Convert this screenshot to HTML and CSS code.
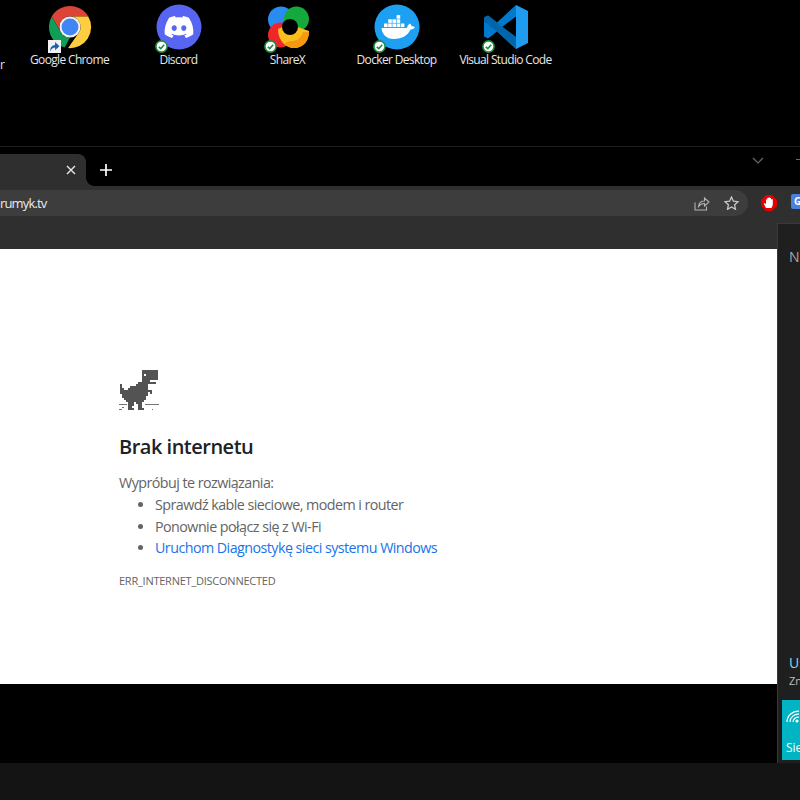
FILE: index.html

```html
<!DOCTYPE html>
<html lang="pl">
<head>
    <meta charset="UTF-8">
    <meta name="viewport" content="width=device-width, initial-scale=1.0">
    <title>Brak internetu</title>
    <link rel="stylesheet" href="styles.css">
</head>
<body>
    <!-- desktop shortcuts -->
    <div class="desktop">
        <div class="shortcut-edge">
            <span class="shortcut-label">r</span>
        </div>
        <div class="shortcut">
            <div class="shortcut-icon">
                <svg width="46" height="46" viewBox="0 0 48 48">
                    <path fill="#db4437" d="M4.95 13A22 22 0 0 1 43.05 13H24A11 11 0 0 0 14.47 29.5Z"/>
                    <path fill="#0f9d58" d="M4.95 13L14.47 29.5A11 11 0 0 0 24 35L18.5 45.3A22 22 0 0 1 4.95 13Z"/>
                    <path fill="#ffcd40" d="M43.05 13H24A11 11 0 0 1 33.53 29.5L22 46A22 22 0 0 0 43.05 13Z"/>
                    <circle cx="24" cy="24" r="11" fill="#f1f1f1"/>
                    <circle cx="24" cy="24" r="8.8" fill="#4285f4"/>
                </svg>
                <span class="link-arrow">
                    <svg width="11" height="11" viewBox="0 0 10 10"><path fill="#1c5fb0" d="M1 9.5C1 5.5 3 3.8 5.5 3.6V1L9.5 4.8 5.5 8.4V6C3.8 6 2.3 7 1 9.5Z"/></svg>
                </span>
            </div>
            <span class="shortcut-label">Google Chrome</span>
        </div>
        <div class="shortcut">
            <div class="shortcut-icon">
                <svg width="46" height="46" viewBox="0 0 46 46">
                    <circle cx="23" cy="23" r="22.5" fill="#5865f2"/>
                    <g transform="translate(8.6 8.6) scale(1.2)">
                        <path fill="#fff" d="M20.317 4.3698a19.7913 19.7913 0 00-4.8851-1.5152.0741.0741 0 00-.0785.0371c-.211.3753-.4447.8648-.6083 1.2495-1.8447-.2762-3.68-.2762-5.4868 0-.1636-.3933-.4058-.8742-.6177-1.2495a.077.077 0 00-.0785-.037 19.7363 19.7363 0 00-4.8852 1.515.0699.0699 0 00-.0321.0277C.5334 9.0458-.319 13.5799.0992 18.0578a.0824.0824 0 00.0312.0561c2.0528 1.5076 4.0413 2.4228 5.9929 3.0294a.0777.0777 0 00.0842-.0276c.4616-.6304.8731-1.2952 1.226-1.9942a.076.076 0 00-.0416-.1057c-.6528-.2476-1.2743-.5495-1.8722-.8923a.077.077 0 01-.0076-.1277c.1258-.0943.2517-.1923.3718-.2914a.0743.0743 0 01.0776-.0105c3.9278 1.7933 8.18 1.7933 12.0614 0a.0739.0739 0 01.0785.0095c.1202.099.246.1981.3728.2924a.077.077 0 01-.0066.1276 12.2986 12.2986 0 01-1.873.8914.0766.0766 0 00-.0407.1067c.3604.698.7719 1.3628 1.225 1.9932a.076.076 0 00.0842.0286c1.961-.6067 3.9495-1.5219 6.0023-3.0294a.077.077 0 00.0313-.0552c.5004-5.177-.8382-9.6739-3.5485-13.6604a.061.061 0 00-.0312-.0286zM8.02 15.3312c-1.1825 0-2.1569-1.0857-2.1569-2.419 0-1.3332.9555-2.4189 2.157-2.4189 1.2108 0 2.1757 1.0952 2.1568 2.419 0 1.3332-.9555 2.4189-2.1569 2.4189zm7.9748 0c-1.1825 0-2.1569-1.0857-2.1569-2.419 0-1.3332.9554-2.4189 2.1569-2.4189 1.2108 0 2.1757 1.0952 2.1568 2.419 0 1.3332-.946 2.4189-2.1568 2.4189Z"/>
                    </g>
                </svg>
                <svg class="sync-check" width="13" height="13" viewBox="0 0 13 13"><circle cx="6.5" cy="6.5" r="5.6" fill="#fff" stroke="#1e8e3e" stroke-width="1.6"/><path d="M3.8 6.8L5.8 8.6 9.2 4.8" fill="none" stroke="#1e8e3e" stroke-width="1.6"/></svg>
            </div>
            <span class="shortcut-label">Discord</span>
        </div>
        <div class="shortcut">
            <div class="shortcut-icon">
                <svg width="46" height="46" viewBox="0 0 46 46">
                    <circle cx="16" cy="15.5" r="13" fill="#2a8cf0"/>
                    <circle cx="31.5" cy="15" r="12.5" fill="#15a83c"/>
                    <circle cx="15.5" cy="31" r="12.5" fill="#f0272a"/>
                    <path fill="#fbbf1d" d="M13 25C13 37 21 44 29 44C38 44 44 37 44 27L24 20Z"/>
                    <path fill="#f59a10" d="M24 37C30 38 36 35 38 28L44 28C44 37 38 44 29 44C25 44 22 42 19 40Z"/>
                    <circle cx="25" cy="23" r="8"/>
                </svg>
                <svg class="sync-check" width="13" height="13" viewBox="0 0 13 13"><circle cx="6.5" cy="6.5" r="5.6" fill="#fff" stroke="#1e8e3e" stroke-width="1.6"/><path d="M3.8 6.8L5.8 8.6 9.2 4.8" fill="none" stroke="#1e8e3e" stroke-width="1.6"/></svg>
            </div>
            <span class="shortcut-label">ShareX</span>
        </div>
        <div class="shortcut">
            <div class="shortcut-icon">
                <svg width="46" height="46" viewBox="0 0 46 46">
                    <circle cx="23" cy="23" r="22.5" fill="#1d9ff2"/>
                    <path fill="#fff" d="M7.5 24H33C33.5 21.5 35 20 36 19.5 37 20.5 37.6 21.5 37.8 22.5 38.8 22.2 40 22.4 40.8 23.2 39.8 25 38 25.6 36.5 25.6 34 31.5 28 35 20 35 12 35 8 30 7.5 24Z"/>
                    <g fill="#fff">
                        <rect x="10" y="19.5" width="3.6" height="3.6"/><rect x="14.2" y="19.5" width="3.6" height="3.6"/><rect x="18.4" y="19.5" width="3.6" height="3.6"/><rect x="22.6" y="19.5" width="3.6" height="3.6"/><rect x="26.8" y="19.5" width="3.6" height="3.6"/>
                        <rect x="14.2" y="15.3" width="3.6" height="3.6"/><rect x="18.4" y="15.3" width="3.6" height="3.6"/><rect x="22.6" y="15.3" width="3.6" height="3.6"/>
                        <rect x="22.6" y="11.1" width="3.6" height="3.6"/>
                    </g>
                </svg>
                <svg class="sync-check" width="13" height="13" viewBox="0 0 13 13"><circle cx="6.5" cy="6.5" r="5.6" fill="#fff" stroke="#1e8e3e" stroke-width="1.6"/><path d="M3.8 6.8L5.8 8.6 9.2 4.8" fill="none" stroke="#1e8e3e" stroke-width="1.6"/></svg>
            </div>
            <span class="shortcut-label">Docker Desktop</span>
        </div>
        <div class="shortcut">
            <div class="shortcut-icon">
                <svg width="46" height="46" viewBox="0 0 46 46">
                    <path fill="#007acc" d="M33 1L14 18.5 5 11.5 1 13.5V32.5L5 34.5 14 27.5 33 45V33.5L19 23 33 12.5Z"/>
                    <path fill="#0065a9" d="M1 13.5L5 11.5 33 33V45L14 27.5 5 20 1 18Z"/>
                    <path fill="#1f9cf0" d="M33 1L45 7V39L33 45Z"/>
                </svg>
                <svg class="sync-check" width="13" height="13" viewBox="0 0 13 13"><circle cx="6.5" cy="6.5" r="5.6" fill="#fff" stroke="#1e8e3e" stroke-width="1.6"/><path d="M3.8 6.8L5.8 8.6 9.2 4.8" fill="none" stroke="#1e8e3e" stroke-width="1.6"/></svg>
            </div>
            <span class="shortcut-label">Visual Studio Code</span>
        </div>
    </div>

    <!-- browser window -->
    <div class="tabstrip">
        <div class="tab">
            <svg width="10" height="10" viewBox="0 0 10 10"><path d="M1 1L9 9M9 1L1 9" stroke="#e8e8e8" stroke-width="1.4"/></svg>
        </div>
        <div class="tab-curve"></div>
        <svg class="new-tab" width="12" height="12" viewBox="0 0 12 12"><path d="M6 0V12M0 6H12" stroke="#fff" stroke-width="1.7"/></svg>
        <svg class="tab-search" width="12" height="7" viewBox="0 0 12 7"><path d="M1 1L6 6 11 1" fill="none" stroke="#6a6a6a" stroke-width="1.1"/></svg>
        <div class="minimize"></div>
    </div>
    <div class="toolbar">
        <div class="omnibox">
            <span class="url">rumyk.tv</span>
            <svg class="share" width="16" height="15" viewBox="0 0 16 15"><path d="M1 6.5V14H12.5V10.5M4.5 10.5C5 6.5 8 5 10.5 5V2L15 6 10.5 10V7.5C8 7.5 6 8.5 4.5 10.5Z" fill="none" stroke="#b4b4b4" stroke-width="1.1"/></svg>
            <svg class="star" width="15" height="14" viewBox="0 0 15 14"><path d="M7.5 1L9.4 5.2 14 5.7 10.6 8.8 11.5 13.3 7.5 11 3.5 13.3 4.4 8.8 1 5.7 5.6 5.2Z" fill="none" stroke="#c8c8c8" stroke-width="1.3"/></svg>
        </div>
        <svg class="ext-stop" width="16" height="16" viewBox="0 0 16 16">
            <path fill="#e60000" d="M5 0H11L16 5V11L11 16H5L0 11V5Z"/>
            <path fill="#fff" d="M5 13L2.8 8.8 3.8 8 5 9.2V4.5H6.2V3H7.5V2.6H9V3H10V4.2H11.8V10L10.5 13Z"/>
        </svg>
        <div class="ext-translate"><span class="ext-g">G</span></div>
    </div>
    <div class="page">
        <svg class="dino" width="42" height="44" viewBox="0 0 42 44">
            <path fill="#535353" d="M23 0H39V10H31V12H37V14H29V20H33V24H31V22H29V26H27V30H25V32H23V38H25V40H19V34H17V32H15V36H13V38H15V40H9V32H7V30H5V28H3V24H1V14H3V18H5V20H9V18H11V16H17V14H19V12H23Z"/>
            <rect x="25" y="4" width="2" height="2" fill="#fff"/>
            <g fill="#737373">
                <rect x="0" y="34" width="8" height="1"/>
                <rect x="26" y="34" width="14" height="1"/>
                <rect x="0" y="39" width="3" height="1"/>
                <rect x="3" y="37" width="2" height="1"/>
                <rect x="33" y="39" width="1" height="1"/>
            </g>
        </svg>
        <h1 class="page-title">Brak internetu</h1>
        <p class="try-label">Wypróbuj te rozwiązania:</p>
        <ul class="suggestions">
            <li>Sprawdź kable sieciowe, modem i router</li>
            <li>Ponownie połącz się z Wi-Fi</li>
            <li><a href="#">Uruchom Diagnostykę sieci systemu Windows</a></li>
        </ul>
        <div class="error-code">ERR_INTERNET_DISCONNECTED</div>
    </div>
    <div class="desktop-gap"></div>
    <div class="taskbar"></div>

    <!-- notification panel, sits over the window -->
    <aside class="panel">
        <div class="panel-title">N</div>
        <div class="panel-bottom">
            <div class="panel-heading">Us</div>
            <div class="panel-sub">Zn</div>
            <div class="net-tile">
                <svg width="14" height="13" viewBox="0 0 14 13"><g fill="none" stroke="#fff" stroke-width="1.2"><path d="M1 12A11 11 0 0 1 13 1.2"/><path d="M4 12A8 8 0 0 1 13 4.2"/><path d="M7 12A5 5 0 0 1 13 7.2"/></g><circle cx="11" cy="11" r="1.6" fill="#fff"/></svg>
                <span class="net-label">Sie</span>
            </div>
        </div>
    </aside>
</body>
</html>
```

FILE: styles.css

```css
* {
    box-sizing: border-box;
}
html, body {
    height: 100%;
}
body {
    margin: 0;
    background-color: #000;
    font-family: "Open Sans", "Noto Sans", Arial, sans-serif;
    display: flex;
    flex-direction: column;
    overflow: hidden;
    position: relative;
}

/* desktop */
.desktop {
    height: 147px;
    flex: none;
    display: flex;
    padding-top: 4px;
    border-bottom: 1px solid #1f1f1f;
}
.shortcut-edge {
    width: 15px;
    flex: none;
    padding-top: 48px;
}
.shortcut {
    width: 109px;
    flex: none;
    display: flex;
    flex-direction: column;
    align-items: center;
}
.shortcut-icon {
    width: 46px;
    height: 46px;
    position: relative;
}
.shortcut-label {
    margin-top: 2px;
    color: #e6e6e6;
    font-size: 12px;
    line-height: 16px;
    white-space: nowrap;
    letter-spacing: -0.65px;
}
.sync-check {
    position: absolute;
    left: -1px;
    bottom: -3px;
}
.link-arrow {
    position: absolute;
    left: 1px;
    bottom: -3px;
    width: 13px;
    height: 13px;
    background-color: #f2f2f2;
    display: flex;
    align-items: center;
    justify-content: center;
}

/* browser chrome */
.tabstrip {
    height: 39px;
    flex: none;
    display: flex;
    align-items: flex-end;
}
.tab {
    width: 86px;
    height: 32px;
    flex: none;
    background-color: #2f2f2f;
    border-top-right-radius: 8px;
    display: flex;
    align-items: center;
    justify-content: flex-end;
    padding-right: 10px;
}
.tab-curve {
    width: 8px;
    height: 8px;
    flex: none;
    background: radial-gradient(circle at 100% 0, transparent 7.5px, #2f2f2f 8px);
}
.new-tab {
    margin: 0 0 10px 6px;
    flex: none;
}
.tab-search {
    margin: 0 0 22px 640px;
    flex: none;
}
.minimize {
    width: 8px;
    height: 1px;
    margin: 0 0 26px 32px;
    flex: none;
    background-color: #6a6a6a;
}
.toolbar {
    height: 63px;
    flex: none;
    background-color: #2f2f2f;
    display: flex;
    align-items: flex-start;
    padding-top: 4px;
}
.omnibox {
    width: 748px;
    height: 26px;
    flex: none;
    background-color: #3d3d3d;
    border-radius: 0 13px 13px 0;
    display: flex;
    align-items: center;
}
.url {
    color: #e8eaed;
    font-size: 13px;
    letter-spacing: -0.85px;
    flex: 1;
}
.share {
    margin-right: 14px;
}
.star {
    margin-right: 9px;
}
.ext-stop {
    margin: 5px 0 0 13px;
    flex: none;
}
.ext-translate {
    width: 16px;
    height: 15px;
    margin: 4px 0 0 14px;
    flex: none;
    background-color: #4a80e0;
    border-radius: 2px;
    color: #fff;
    font-size: 10px;
    font-weight: 700;
    line-height: 15px;
    padding-left: 3px;
}

/* error page */
.page {
    height: 435px;
    flex: none;
    background-color: #fff;
    padding: 121px 0 0 119px;
    color: #646464;
    font-size: 14.3px;
    letter-spacing: -0.55px;
}
.dino {
    display: block;
}
.page-title {
    margin: 19px 0 0;
    color: #202124;
    font-size: 20px;
    font-weight: 600;
    line-height: 28px;
    letter-spacing: -0.5px;
}
.try-label {
    margin: 11px 0 0;
    line-height: 21px;
}
.suggestions {
    margin: 1px 0 0;
    padding-left: 36px;
    line-height: 21.5px;
}
.suggestions a {
    color: #1a73e8;
    text-decoration: none;
}
.error-code {
    margin-top: 14px;
    font-size: 11px;
    line-height: 16px;
    letter-spacing: -0.24px;
}

.desktop-gap {
    flex: 1;
}
.taskbar {
    height: 37px;
    flex: none;
    background-color: #141414;
}

/* notification panel */
.panel {
    position: absolute;
    left: 777px;
    top: 223px;
    width: 23px;
    height: 540px;
    background-color: #1f1f1f;
    border-left: 1px solid #3a3a3a;
    border-top: 1px solid #3a3a3a;
    display: flex;
    flex-direction: column;
    justify-content: space-between;
    padding: 23px 0 3px 11px;
    overflow: hidden;
}
.panel-title {
    color: #a8a8a8;
    font-size: 14px;
    line-height: 20px;
}
.panel-heading {
    color: #7fdde8;
    font-size: 14px;
    line-height: 20px;
}
.panel-sub {
    color: #bdbdbd;
    font-size: 11px;
    line-height: 16px;
    margin-bottom: 11px;
}
.net-tile {
    width: 30px;
    height: 60px;
    margin-left: -7px;
    background-color: #00b4c4;
    padding: 10px 0 0 4px;
    display: flex;
    flex-direction: column;
    gap: 17px;
}
.net-label {
    color: #fff;
    font-size: 12px;
    line-height: 16px;
}
```
